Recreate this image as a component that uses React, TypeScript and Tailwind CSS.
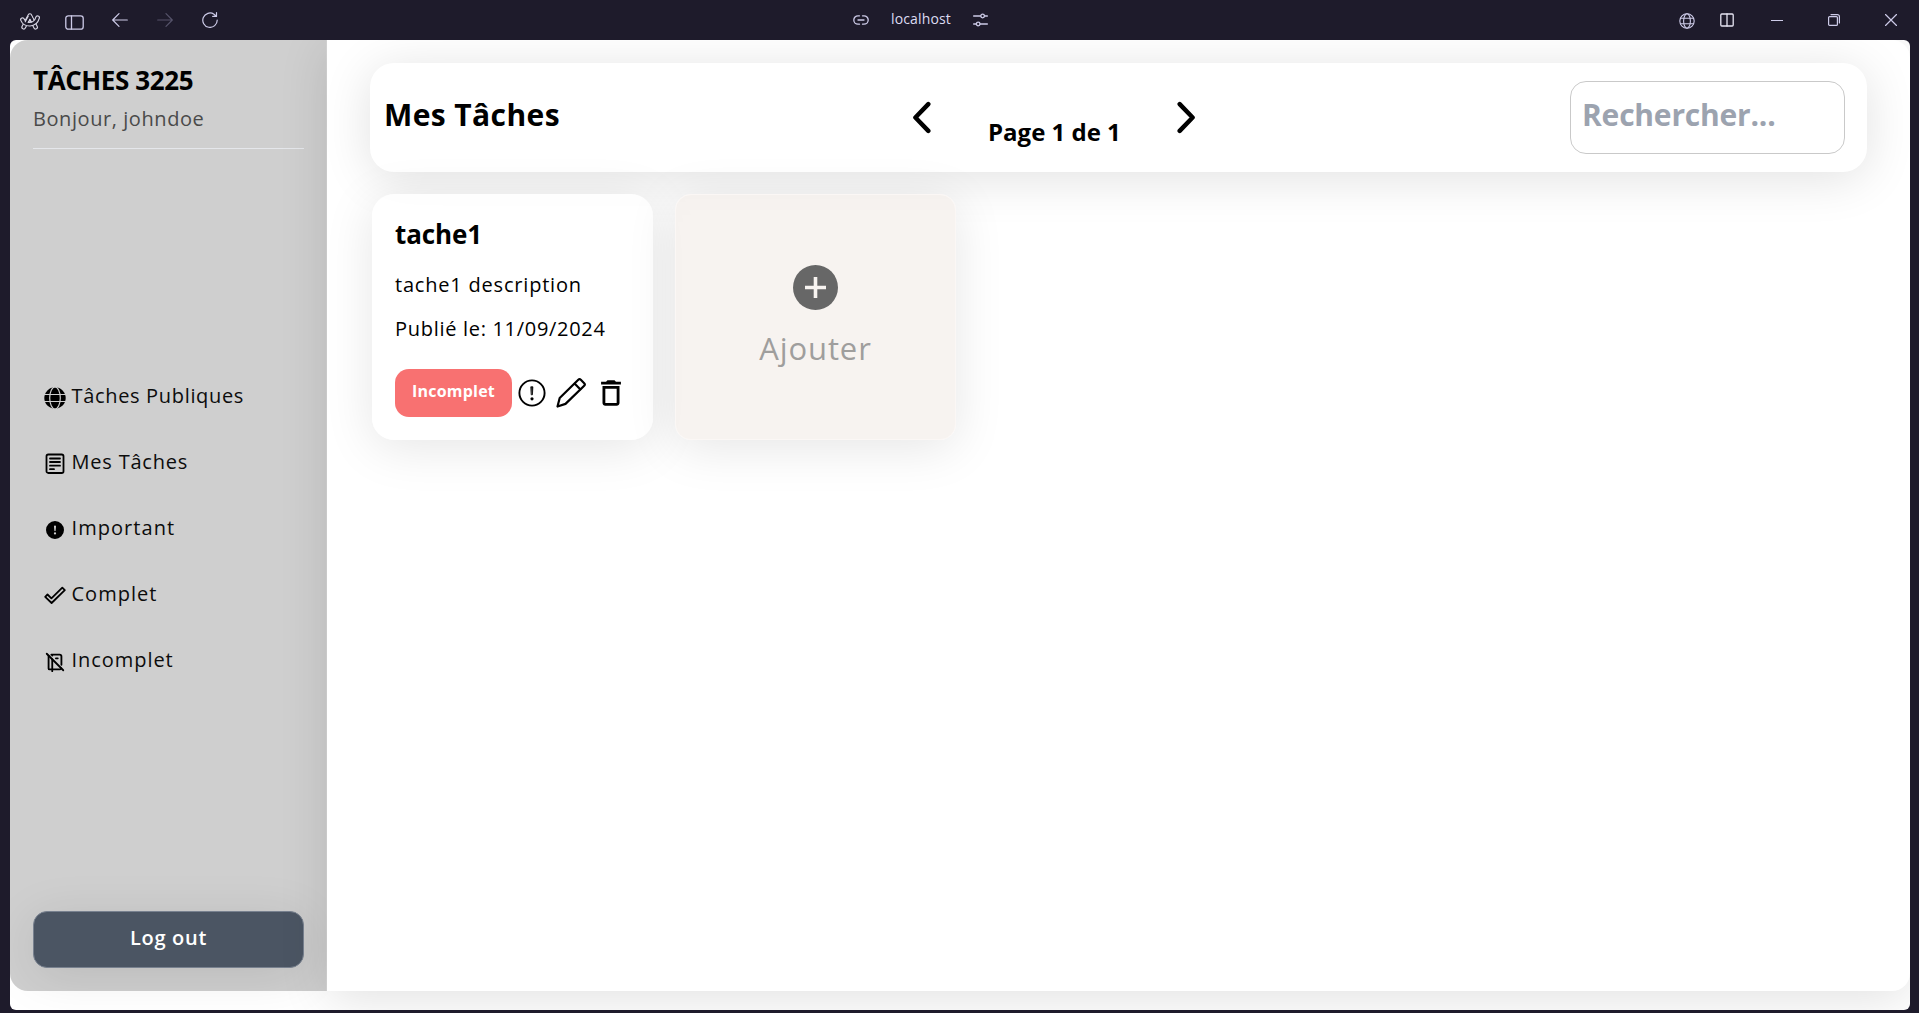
import React from "react";
import { TbNotebookOff } from "react-icons/tb";
import { BsExclamationCircleFill } from "react-icons/bs";
import { MdDeleteOutline } from "react-icons/md";

type IconProps = { className?: string };

const stroke = {
  fill: "none",
  stroke: "currentColor",
  strokeLinecap: "round" as const,
  strokeLinejoin: "round" as const,
};

function ArcLogo({ className }: IconProps) {
  return (
    <svg viewBox="0 0 20 17" className={className} {...stroke}>
      <path d="M3.700 14.200 9.900 2.700l5.700 11.500" strokeWidth="4.800" />
      <path d="M3.700 14.200 9.900 2.700l5.700 11.500" stroke="#1e1b2b" strokeWidth="2.500" />
      <path d="M2.500 6.700c2.300 5.600 12.600 6.900 15.100-2" strokeWidth="4.800" />
      <path d="M2.500 6.700c2.300 5.600 12.600 6.900 15.100-2" stroke="#1e1b2b" strokeWidth="2.500" />
      <path d="M6.100 9.700 9.900 2.700l2.200 4.300" stroke="#1e1b2b" strokeWidth="2.200" />
      <path d="m5.200 8.800 3-5.600M8.500 9.200l1.500-3 1.400 2.800" strokeWidth="1.100" />
    </svg>
  );
}

function GlobeIcon({ className }: IconProps) {
  return (
    <svg viewBox="0 0 22 22" className={className}>
      <circle cx="11" cy="11" r="10.700" fill="currentColor" />
      <g fill="none" stroke="#cfcfcf" strokeWidth="1.200">
        <ellipse cx="11" cy="11" rx="5.300" ry="11" />
        <path d="M0 7.500h22M0 14.500h22" />
      </g>
    </svg>
  );
}

function NoteIcon({ className }: IconProps) {
  return (
    <svg viewBox="0 0 22 22" className={className} {...stroke} strokeWidth="1.800">
      <rect x="2.500" y="1.500" width="17" height="18.500" rx="1.800" />
      <path d="M6 5.500h10M6 9h10M6 12.700h10M6 16.200h4" />
    </svg>
  );
}

function CheckOutline({ className }: IconProps) {
  return (
    <svg viewBox="0 0 22 22" className={className} {...stroke} strokeWidth="1.800">
      <path d="m1.200 11.800 2.300-2.300 3.900 3.900L18.300 2.700l2.500 2.500L7.600 18z" />
    </svg>
  );
}

function AlertCircle({ className }: IconProps) {
  return (
    <svg viewBox="0 0 28 28" className={className} {...stroke} strokeWidth="1.900">
      <circle cx="14" cy="14" r="12.600" />
      <path d="M13.100 7.800h1.800l-.5 8h-.8z" fill="currentColor" strokeWidth=".8" />
      <circle cx="14" cy="19.800" r="1.600" fill="currentColor" stroke="none" />
    </svg>
  );
}

function Pencil({ className }: IconProps) {
  return (
    <svg viewBox="0 0 30 30" className={className} {...stroke} strokeWidth="2.200">
      <path d="M1.500 28.500 3.700 20 22.300 1.800c.8-.8 1.700-.8 2.500 0l3.400 3.400c.8.8.8 1.700 0 2.500L9.500 25.900z" />
      <path d="m18.800 5.800 5.400 5.400" />
    </svg>
  );
}

function Chevron({ className }: IconProps) {
  return (
    <svg viewBox="0 0 20 34" className={className} {...stroke} strokeWidth="4.600">
      <path d="M16.500 3.200 3.200 17l13.300 13.800" />
    </svg>
  );
}

function PlusCircle({ className }: IconProps) {
  return (
    <svg viewBox="0 0 45 45" className={className}>
      <circle cx="22.500" cy="22.500" r="22.500" fill="#676767" />
      <path d="M12 22.500h21M22.500 12v21" stroke="#f8f4f1" strokeWidth="3.600" />
    </svg>
  );
}

function TitleBar() {
  return (
    <header className="flex h-10 shrink-0 items-center text-[#cdcbe8]">
      <ArcLogo className="ml-5 mt-[3px] h-[17px] w-5 text-[#d8d6e4]" />
      <svg viewBox="0 0 19 15" className="ml-[25px] mt-1 h-[15px] w-[19px]" {...stroke} strokeWidth="1.300">
        <rect x=".8" y=".8" width="17.400" height="13.400" rx="2.500" />
        <path d="M6.500 1v13" />
      </svg>
      <svg viewBox="0 0 16 14" className="ml-7 h-3.5 w-4" {...stroke} strokeWidth="1.200">
        <path d="M15.300 7H.8M7 .7.700 7 7 13.300" />
      </svg>
      <svg viewBox="0 0 16 14" className="ml-[29px] h-3.5 w-4 text-[#56536a]" {...stroke} strokeWidth="1.200">
        <path d="M.7 7h14.500M9 .7 15.300 7 9 13.300" />
      </svg>
      <svg viewBox="0 0 16 16" className="ml-[29px] h-4 w-4" {...stroke} strokeWidth="1.200">
        <path d="M15.200 8A7.200 7.200 0 1 1 12 2.200l2.300 2M14.500.6v3.800h-3.800" />
      </svg>

      <svg viewBox="0 0 16 10" className="ml-[635px] h-2.5 w-4" {...stroke} strokeWidth="1.300">
        <path d="M6.500.8H5a4.200 4.200 0 0 0 0 8.400h1.500M9.500.8H11a4.200 4.200 0 0 1 0 8.400H9.500M5 5h6" />
      </svg>
      <span className="-mt-0.5 ml-[22px] w-[60px] whitespace-nowrap text-[14px] leading-5 tracking-[0.150px] text-[#dddbf2]">localhost</span>
      <svg viewBox="0 0 15 14" className="ml-[22px] h-3.5 w-[15px]" {...stroke} strokeWidth="1.300">
        <path d="M.6 3h7M11.600 3h2.800M.6 11h2.600M7.200 11h7.200" />
        <circle cx="9.600" cy="3" r="1.800" />
        <circle cx="5.200" cy="11" r="1.800" />
      </svg>

      <svg viewBox="0 0 16 16" className="ml-auto mr-[25px] mt-px h-4 w-4" {...stroke} strokeWidth="1.100">
        <circle cx="8" cy="8" r="7.200" />
        <ellipse cx="8" cy="8" rx="3.400" ry="7.200" />
        <path d="M1.500 5.200h13M1.500 10.800h13" />
      </svg>
      <svg viewBox="0 0 14 14" className="mr-[37px] h-3.5 w-3.5 text-[#e6e5f2]" {...stroke} strokeWidth="1.300">
        <rect x=".8" y="1" width="12.400" height="12" rx="1" />
        <path d="M7 1v12" />
      </svg>
      <span className="mr-[45px] h-px w-3 bg-[#cdcbe8]" />
      <svg viewBox="0 0 12 12" className="mr-[45px] h-3 w-3" {...stroke} strokeWidth="1.200">
        <rect x=".6" y="2.600" width="8.800" height="8.800" rx="1" />
        <path d="M3 .6h6.400a2 2 0 0 1 2 2V9" />
      </svg>
      <svg viewBox="0 0 12 12" className="mr-[22px] h-3 w-3" {...stroke} strokeWidth="1.200">
        <path d="m.5.500 11 11M11.500.500l-11 11" />
      </svg>
    </header>
  );
}

const links = [
  { label: "Tâches Publiques", icon: <GlobeIcon className="size-[22px]" />, spacing: "tracking-[0.67px]" },
  { label: "Mes Tâches", icon: <NoteIcon className="size-[22px]" />, spacing: "tracking-[0.8px]" },
  { label: "Important", icon: <BsExclamationCircleFill className="m-0.5 size-[18px]" />, spacing: "tracking-[1.05px]" },
  { label: "Complet", icon: <CheckOutline className="size-[22px]" />, spacing: "tracking-[1px]" },
  { label: "Incomplet", icon: <TbNotebookOff className="size-[22px]" />, spacing: "tracking-[0.95px]" },
];

function Sidebar() {
  return (
    <aside className="flex h-[951px] w-[317px] shrink-0 flex-col rounded-l-[18px] border-r border-[#d6d6d6] bg-[#cfcfcf] pl-[23px] pr-[22px]">
      <h1 className="mt-[22px] whitespace-nowrap text-[26px] font-bold leading-9 tracking-[-0.4px]">TÂCHES 3225</h1>
      <p className="mt-[7px] whitespace-nowrap text-[20px] leading-7 tracking-[0.57px] text-[#4a4a4a]">Bonjour, johndoe</p>
      <hr className="mt-[15px] border-[#e5e7eb]" />
      <nav className="mt-[214px] flex flex-col">
        {links.map((l) => (
          <a key={l.label} className="flex h-[66px] items-center gap-[5.500px] pl-[11px]">
            <span className="mt-1">{l.icon}</span>
            <span className={"whitespace-nowrap text-[20px] leading-7 text-[#0c0c0c] " + l.spacing}>{l.label}</span>
          </a>
        ))}
      </nav>
      <button className="mb-[23px] mt-auto h-[57px] rounded-[14px] border border-[#78818f] bg-[#4b5563] pb-1 text-[20px] font-semibold tracking-[0.7px] text-white shadow-[0_8px_50px_rgba(0,0,0,0.1)]">
        Log out
      </button>
    </aside>
  );
}

function Toolbar() {
  return (
    <div className="flex h-[109px] items-center rounded-[24px] bg-white pl-3.5 pr-[22px] shadow-[0_6px_50px_rgba(0,0,0,0.12)]">
      <h2 className="w-[528px] whitespace-nowrap pb-[6px] text-[30px] font-bold leading-10 tracking-[0.4px]">Mes Tâches</h2>
      <Chevron className="-mt-px h-[33px] w-5" />
      <span className="ml-14 mt-[29px] w-[132px] whitespace-nowrap text-[24px] font-bold leading-8">Page 1 de 1</span>
      <Chevron className="-mt-px ml-14 h-[33px] w-5 rotate-180" />
      <input
        placeholder="Rechercher..."
        className="ml-auto h-[73px] w-[275px] rounded-[16px] border border-[#c9c9c9] pb-[6px] pl-[11px] pr-3 text-[30px] font-bold tracking-[-0.2px] placeholder:text-[#9ca3af]"
      />
    </div>
  );
}

function TaskCard() {
  return (
    <article className="h-[246px] w-[281px] rounded-[22px] bg-white/85 px-[23px] shadow-[0_8px_50px_rgba(0,0,0,0.1)]">
      <h3 className="mt-[22px] whitespace-nowrap text-[26px] font-bold leading-9 tracking-[-0.1px]">tache1</h3>
      <p className="mt-[19px] whitespace-nowrap text-[20px] leading-7 tracking-[0.8px]">tache1 description</p>
      <p className="mt-4 whitespace-nowrap text-[20px] leading-7 tracking-[0.7px]">Publié le: 11/09/2024</p>
      <div className="mt-[26px] flex items-center">
        <button className="h-12 w-[117px] rounded-[14px] bg-[#f87171] pb-[5px] text-[16px] font-bold tracking-[0.2px] text-white">Incomplet</button>
        <AlertCircle className="-mt-px ml-[6px] size-7" />
        <Pencil className="-mt-px ml-[10px] size-[30px]" />
        <MdDeleteOutline className="-mt-px ml-2 size-[34px]" />
      </div>
    </article>
  );
}

function AddCard() {
  return (
    <button className="flex h-[246px] w-[281px] flex-col items-center rounded-[16px] border border-[#fbf7f5] bg-[#f4eeea]/70 pt-[70px] shadow-[0_8px_50px_rgba(0,0,0,0.1)]">
      <PlusCircle className="size-[45px]" />
      <span className="mt-[18px] whitespace-nowrap text-[31px] font-medium leading-10 tracking-[0.9px] text-[#9f9e9d]">Ajouter</span>
    </button>
  );
}

export default function App() {
  return (
    <div className="flex h-[1013px] w-[1919px] flex-col overflow-hidden bg-[#1e1b2b] font-['Open_Sans','Noto_Sans',sans-serif] text-black">
      <TitleBar />
      <div className="mx-[10px] flex h-[970px] w-[1900px] overflow-hidden rounded-[6px] bg-white">
        <Sidebar />
        <main className="relative h-[951px] flex-1 rounded-r-[18px] bg-white px-[43px] pt-[23px] shadow-[0_8px_50px_rgba(0,0,0,0.12)]">
          <Toolbar />
          <div className="mt-[22px] flex gap-[22px] pl-0.5">
            <TaskCard />
            <AddCard />
          </div>
        </main>
      </div>
    </div>
  );
}
